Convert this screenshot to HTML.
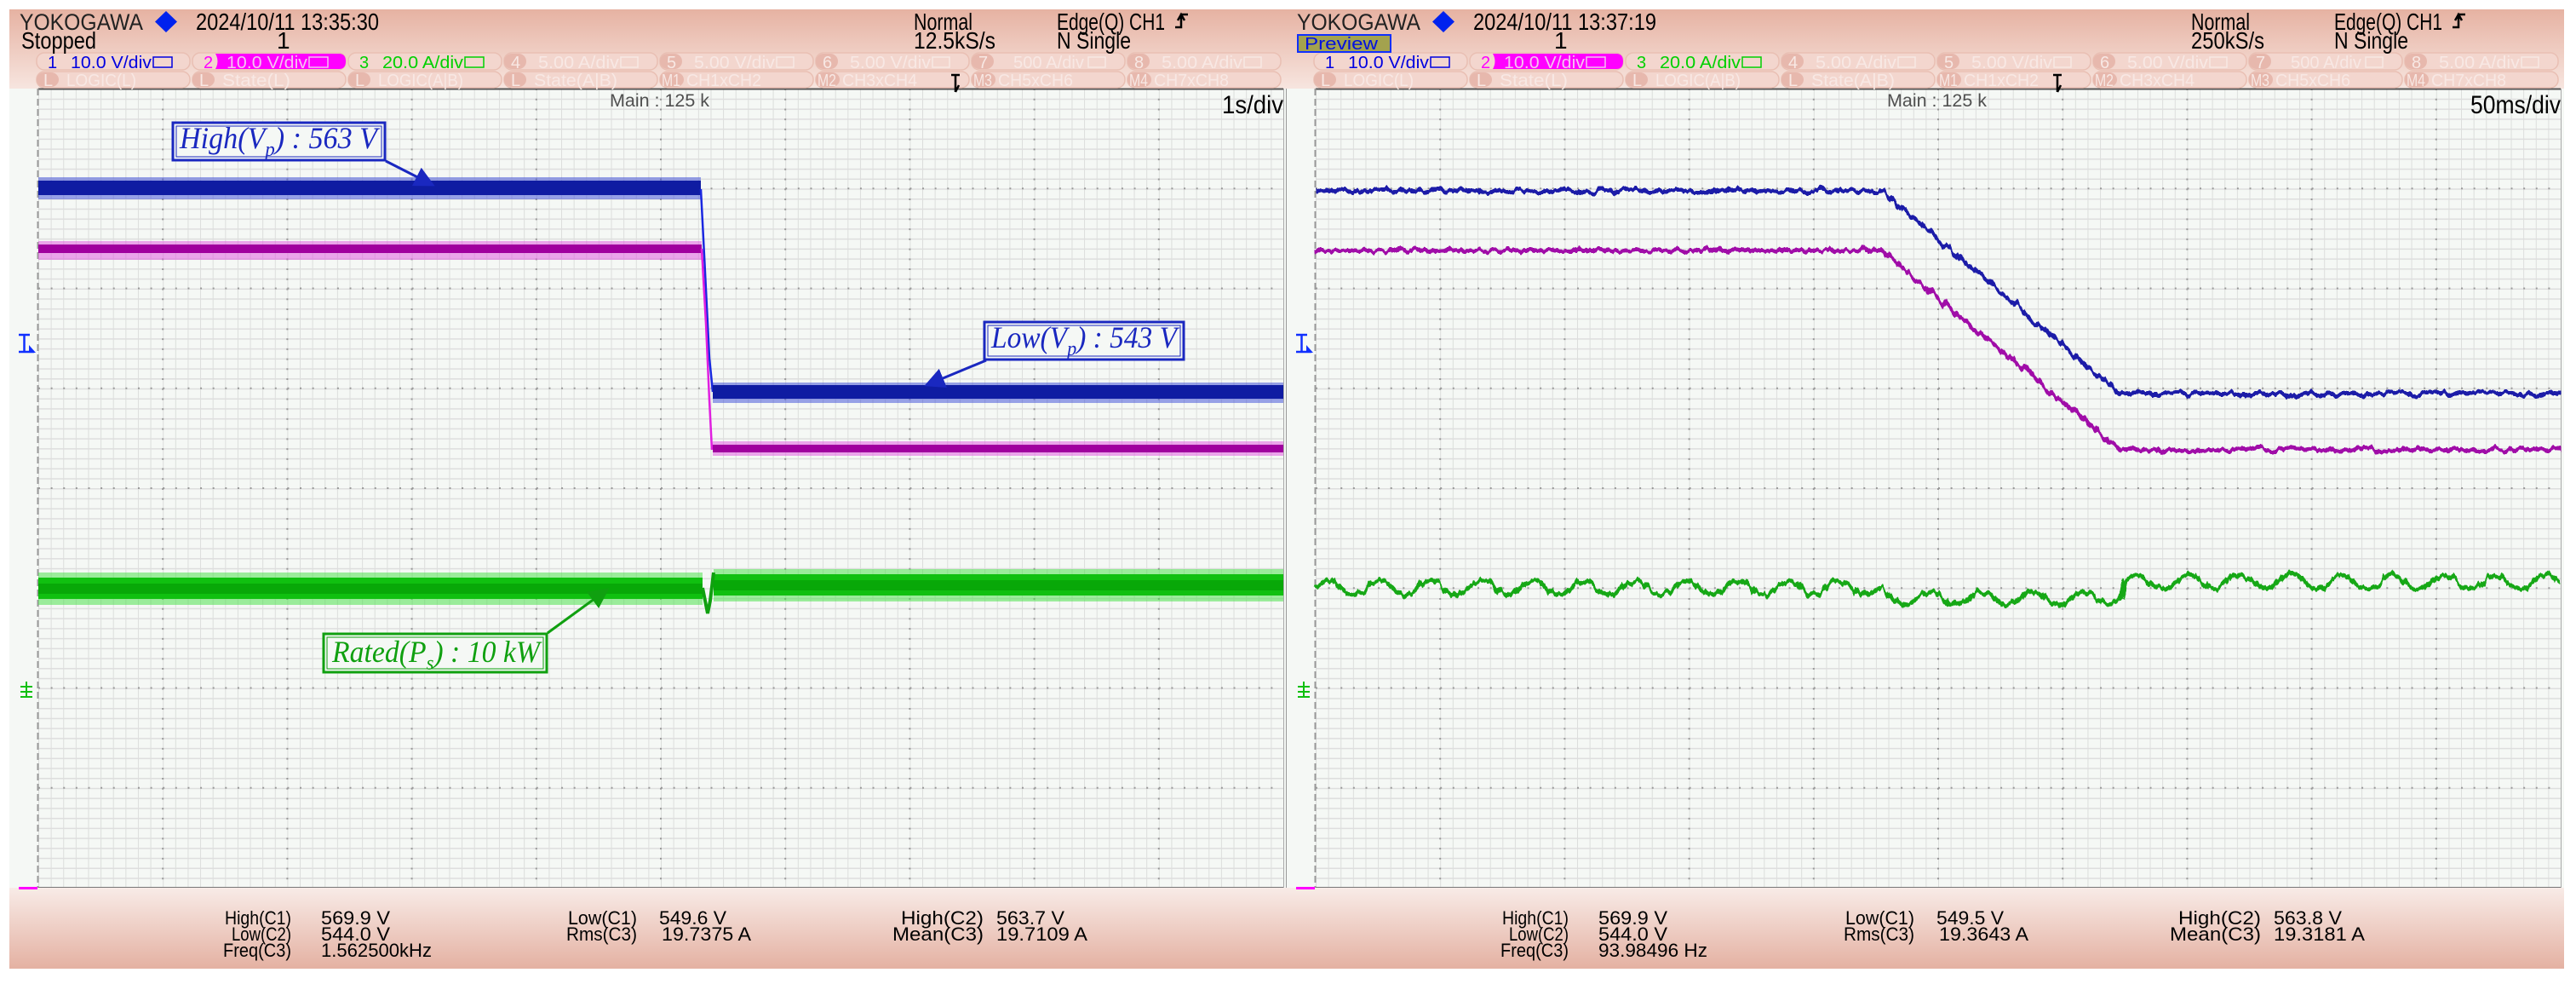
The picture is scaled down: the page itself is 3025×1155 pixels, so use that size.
<!DOCTYPE html>
<html><head><meta charset="utf-8"><style>
html,body{margin:0;padding:0;background:#fff;}
svg{display:block;}
.s{font-family:"Liberation Sans",sans-serif;}
.ser{font-family:"Liberation Serif",serif;font-style:italic;}
</style></head><body>
<svg width="3025" height="1155" viewBox="0 0 3025 1155" xmlns="http://www.w3.org/2000/svg">
<defs>
<linearGradient id="hg" x1="0" y1="0" x2="0" y2="1"><stop offset="0" stop-color="#e6b2a2"/><stop offset="1" stop-color="#f7e5df"/></linearGradient>
<linearGradient id="fg" x1="0" y1="0" x2="0" y2="1"><stop offset="0" stop-color="#f8ebe7"/><stop offset="1" stop-color="#e4b1a2"/></linearGradient>
<pattern id="gp" x="45" y="104" width="14.62" height="11.725" patternUnits="userSpaceOnUse">
<rect width="14.62" height="11.725" fill="#f5f8f5"/>
<line x1="0.5" y1="0" x2="0.5" y2="11.725" stroke="#dcdedc" stroke-width="1"/>
<line x1="0" y1="0.75" x2="14.62" y2="0.75" stroke="#dedede" stroke-width="1.5"/>
</pattern>
<marker id="ab" markerWidth="8" markerHeight="8" refX="7" refY="4" orient="auto" markerUnits="strokeWidth"><path d="M0,0 L8,4 L0,8 z" fill="#1a28c0"/></marker>
<marker id="ag" markerWidth="8" markerHeight="8" refX="7" refY="4" orient="auto" markerUnits="strokeWidth"><path d="M0,0 L8,4 L0,8 z" fill="#10a010"/></marker>
<filter id="nz" filterUnits="userSpaceOnUse" x="1530" y="150" width="1500" height="650"><feTurbulence type="fractalNoise" baseFrequency="0.12 0.02" numOctaves="3" seed="4"/><feDisplacementMap in="SourceGraphic" scale="12" xChannelSelector="R" yChannelSelector="G"/></filter>
<filter id="nzg" filterUnits="userSpaceOnUse" x="1530" y="600" width="1500" height="200"><feTurbulence type="fractalNoise" baseFrequency="0.15 0.02" numOctaves="3" seed="7"/><feDisplacementMap in="SourceGraphic" scale="12" xChannelSelector="R" yChannelSelector="G"/></filter>

<g id="base" class="s">
<rect x="11" y="11" width="1500" height="93" fill="url(#hg)"/>
<rect x="11" y="104" width="1500" height="938" fill="#f5f8f5"/>
<rect x="11" y="1042" width="1500" height="95" fill="url(#fg)"/>
<rect x="45" y="104" width="1462" height="938" fill="url(#gp)"/>
<g stroke="#999" stroke-width="2" stroke-dasharray="2 9.725">
<line x1="191.2" y1="104" x2="191.2" y2="1042"/><line x1="337.4" y1="104" x2="337.4" y2="1042"/><line x1="483.6" y1="104" x2="483.6" y2="1042"/><line x1="629.8" y1="104" x2="629.8" y2="1042"/><line x1="776" y1="104" x2="776" y2="1042"/><line x1="922.2" y1="104" x2="922.2" y2="1042"/><line x1="1068.4" y1="104" x2="1068.4" y2="1042"/><line x1="1214.6" y1="104" x2="1214.6" y2="1042"/><line x1="1360.8" y1="104" x2="1360.8" y2="1042"/>
</g>
<g stroke="#999" stroke-width="2" stroke-dasharray="2 12.62">
<line x1="45" y1="221.3" x2="1507" y2="221.3"/><line x1="45" y1="338.5" x2="1507" y2="338.5"/><line x1="45" y1="455.8" x2="1507" y2="455.8"/><line x1="45" y1="573" x2="1507" y2="573"/><line x1="45" y1="690.3" x2="1507" y2="690.3"/><line x1="45" y1="807.5" x2="1507" y2="807.5"/><line x1="45" y1="924.8" x2="1507" y2="924.8"/>
</g>
<line x1="45" y1="104.5" x2="1507" y2="104.5" stroke="#555" stroke-width="2"/>
<line x1="44.5" y1="104" x2="44.5" y2="1042" stroke="#999" stroke-width="2" stroke-dasharray="8 4"/>
<line x1="1507.5" y1="104" x2="1507.5" y2="1042" stroke="#aaa" stroke-width="1"/>
<line x1="45" y1="1041.5" x2="1507" y2="1041.5" stroke="#777" stroke-width="1"/>
<text x="716" y="125" font-size="21" fill="#505050" textLength="117" lengthAdjust="spacingAndGlyphs">Main : 125 k</text>
<g fill="#f3d6ce" stroke="#e9bfb3" stroke-width="1.5">
<rect x="43" y="62" width="180" height="20" rx="9"/><rect x="226" y="62" width="180" height="20" rx="9"/><rect x="409" y="62" width="180" height="20" rx="9"/><rect x="592" y="62" width="180" height="20" rx="9"/><rect x="775" y="62" width="180" height="20" rx="9"/><rect x="958" y="62" width="180" height="20" rx="9"/><rect x="1141" y="62" width="180" height="20" rx="9"/><rect x="1324" y="62" width="180" height="20" rx="9"/>
<rect x="43" y="84" width="180" height="19" rx="9"/><rect x="226" y="84" width="180" height="19" rx="9"/><rect x="409" y="84" width="180" height="19" rx="9"/><rect x="592" y="84" width="180" height="19" rx="9"/><rect x="775" y="84" width="180" height="19" rx="9"/><rect x="958" y="84" width="180" height="19" rx="9"/><rect x="1141" y="84" width="180" height="19" rx="9"/><rect x="1324" y="84" width="180" height="19" rx="9"/>
</g>
<g fill="#e7b8ad">
<rect x="592" y="63" width="26" height="18" rx="9"/><rect x="775" y="63" width="26" height="18" rx="9"/><rect x="958" y="63" width="26" height="18" rx="9"/><rect x="1141" y="63" width="26" height="18" rx="9"/><rect x="1324" y="63" width="26" height="18" rx="9"/>
<rect x="43" y="85" width="26" height="17" rx="9"/><rect x="226" y="85" width="26" height="17" rx="9"/><rect x="409" y="85" width="26" height="17" rx="9"/><rect x="592" y="85" width="26" height="17" rx="9"/><rect x="775" y="85" width="28" height="17" rx="9"/><rect x="958" y="85" width="28" height="17" rx="9"/><rect x="1141" y="85" width="28" height="17" rx="9"/><rect x="1324" y="85" width="28" height="17" rx="9"/>
</g>
<path d="M253 63 H398 Q406 63 406 72 Q406 81 398 81 H253 Q258 72 253 63 Z" fill="#ff00ff"/>
<g font-size="20">
<text x="56" y="80" fill="#0000e0">1</text><text x="83" y="80" fill="#0000e0" textLength="95" lengthAdjust="spacingAndGlyphs">10.0 V/div</text>
<text x="239" y="80" fill="#ff00ff">2</text><text x="266" y="80" fill="#f6c0f2" textLength="95" lengthAdjust="spacingAndGlyphs">10.0 V/div</text>
<text x="422" y="80" fill="#00d000">3</text><text x="449" y="80" fill="#00d000" textLength="95" lengthAdjust="spacingAndGlyphs">20.0 A/div</text>
<g fill="#f8e8e4">
<text x="600" y="80">4</text><text x="632" y="80" textLength="95" lengthAdjust="spacingAndGlyphs">5.00 A/div</text>
<text x="783" y="80">5</text><text x="815" y="80" textLength="95" lengthAdjust="spacingAndGlyphs">5.00 V/div</text>
<text x="966" y="80">6</text><text x="998" y="80" textLength="95" lengthAdjust="spacingAndGlyphs">5.00 V/div</text>
<text x="1149" y="80">7</text><text x="1190" y="80" textLength="83" lengthAdjust="spacingAndGlyphs">500 A/div</text>
<text x="1332" y="80">8</text><text x="1364" y="80" textLength="95" lengthAdjust="spacingAndGlyphs">5.00 A/div</text>
<text x="51" y="101">L</text><text x="78" y="101" textLength="82" lengthAdjust="spacingAndGlyphs">LOGIC(L)</text>
<text x="234" y="101">L</text><text x="261" y="101" textLength="80" lengthAdjust="spacingAndGlyphs">State(L)</text>
<text x="417" y="101">L</text><text x="444" y="101" textLength="100" lengthAdjust="spacingAndGlyphs">LOGIC(A|B)</text>
<text x="600" y="101">L</text><text x="627" y="101" textLength="98" lengthAdjust="spacingAndGlyphs">State(A|B)</text>
<text x="777" y="101" textLength="22" lengthAdjust="spacingAndGlyphs">M1</text><text x="806" y="101" textLength="88" lengthAdjust="spacingAndGlyphs">CH1xCH2</text>
<text x="960" y="101" textLength="22" lengthAdjust="spacingAndGlyphs">M2</text><text x="989" y="101" textLength="88" lengthAdjust="spacingAndGlyphs">CH3xCH4</text>
<text x="1143" y="101" textLength="22" lengthAdjust="spacingAndGlyphs">M3</text><text x="1172" y="101" textLength="88" lengthAdjust="spacingAndGlyphs">CH5xCH6</text>
<text x="1326" y="101" textLength="22" lengthAdjust="spacingAndGlyphs">M4</text><text x="1355" y="101" textLength="88" lengthAdjust="spacingAndGlyphs">CH7xCH8</text>
</g>
</g>
<g fill="none" stroke-width="1.5">
<rect x="180" y="67" width="22" height="12" stroke="#0000e0"/><rect x="363" y="67" width="22" height="12" stroke="#f6c0f2"/><rect x="546" y="67" width="22" height="12" stroke="#00d000"/>
<rect x="729" y="67" width="20" height="12" stroke="#f8e8e4"/><rect x="912" y="67" width="20" height="12" stroke="#f8e8e4"/><rect x="1095" y="67" width="20" height="12" stroke="#f8e8e4"/><rect x="1278" y="67" width="20" height="12" stroke="#f8e8e4"/><rect x="1461" y="67" width="20" height="12" stroke="#f8e8e4"/>
</g>
<text x="23" y="35" font-size="27" fill="#222" textLength="145" lengthAdjust="spacingAndGlyphs">YOKOGAWA</text>
<path d="M195 13 L208 25.5 L195 38 L182 25.5 Z" fill="#0022ee"/>
<text x="1073" y="35" font-size="28" fill="#000" textLength="69" lengthAdjust="spacingAndGlyphs">Normal</text>
<text x="1241" y="35" font-size="28" fill="#000" textLength="127" lengthAdjust="spacingAndGlyphs">Edge(Q) CH1</text>
<path d="M1380 32 H1387 V17 H1395 M1383 24 L1387 17 L1391 24" fill="none" stroke="#000" stroke-width="2.5"/>
<text x="1241" y="57" font-size="28" fill="#000" textLength="87" lengthAdjust="spacingAndGlyphs">N Single</text>
<text x="325" y="57" font-size="28" fill="#000">1</text>
<path d="M22 393 H35 M28.5 393 V413 M22 413 H40" stroke="#1030ff" stroke-width="2.5" fill="none"/>
<path d="M34 405 L42 414 L34 414 Z" fill="#1030ff"/>
<path d="M24 806 H38 M24 812 H38 M24 818 H38 M31 800 V818" stroke="#10c010" stroke-width="2" fill="none"/>
<rect x="22" y="1041" width="22" height="3" fill="#ff00ff"/>
<g font-size="22" fill="#000">
<text x="264" y="1085" textLength="78" lengthAdjust="spacingAndGlyphs">High(C1)</text>
<text x="272" y="1104" textLength="70" lengthAdjust="spacingAndGlyphs">Low(C2)</text>
<text x="262" y="1123" textLength="80" lengthAdjust="spacingAndGlyphs">Freq(C3)</text>
<text x="667" y="1085" textLength="81" lengthAdjust="spacingAndGlyphs">Low(C1)</text>
<text x="665" y="1104" textLength="83" lengthAdjust="spacingAndGlyphs">Rms(C3)</text>
<text x="1058" y="1085" textLength="97" lengthAdjust="spacingAndGlyphs">High(C2)</text>
<text x="1048" y="1104" textLength="107" lengthAdjust="spacingAndGlyphs">Mean(C3)</text>
</g>
</g>
</defs>

<rect width="3025" height="1155" fill="#fff"/>
<use href="#base"/>
<use href="#base" transform="translate(1500,0)"/>
<line x1="1510.5" y1="104" x2="1510.5" y2="1042" stroke="#999" stroke-width="1"/>

<g class="s">
<text x="25" y="57" font-size="28" fill="#000" textLength="88" lengthAdjust="spacingAndGlyphs">Stopped</text>
<text x="230" y="35" font-size="28" fill="#000" textLength="215" lengthAdjust="spacingAndGlyphs">2024/10/11 13:35:30</text>
<text x="1073" y="57" font-size="28" fill="#000" textLength="96" lengthAdjust="spacingAndGlyphs">12.5kS/s</text>
<text x="1435" y="133" font-size="30" fill="#000" textLength="72" lengthAdjust="spacingAndGlyphs">1s/div</text>
<g font-size="22" fill="#000">
<text x="377" y="1085" textLength="81" lengthAdjust="spacingAndGlyphs">569.9 V</text>
<text x="377" y="1104" textLength="81" lengthAdjust="spacingAndGlyphs">544.0 V</text>
<text x="377" y="1123" textLength="130" lengthAdjust="spacingAndGlyphs">1.562500kHz</text>
<text x="774" y="1085" textLength="79" lengthAdjust="spacingAndGlyphs">549.6 V</text>
<text x="777" y="1104" textLength="105" lengthAdjust="spacingAndGlyphs">19.7375 A</text>
<text x="1170" y="1085" textLength="80" lengthAdjust="spacingAndGlyphs">563.7 V</text>
<text x="1170" y="1104" textLength="107" lengthAdjust="spacingAndGlyphs">19.7109 A</text>
</g>
</g>
<path d="M1117 88 H1127 M1122 88 V108 M1122 108 L1126 100" stroke="#000" stroke-width="2.5" fill="none"/>

<rect x="45" y="208" width="778" height="26" fill="#3848d8" opacity="0.5"/>
<rect x="45" y="212" width="778" height="17" fill="#0f1ca2"/>
<rect x="45" y="283" width="779" height="22" fill="#e050e0" opacity="0.5"/>
<rect x="45" y="287" width="779" height="10" fill="#a0009e"/>
<path d="M823 222 L827 300 L833 420 L837 460" stroke="#1a28e0" stroke-width="2.5" fill="none"/>
<path d="M824 292 L829 380 L833 470 L836 528" stroke="#e020e0" stroke-width="2.5" fill="none"/>
<rect x="837" y="449" width="670" height="24" fill="#3848d8" opacity="0.5"/>
<rect x="837" y="452" width="670" height="16" fill="#0f1ca2"/>
<rect x="837" y="518" width="670" height="17" fill="#e050e0" opacity="0.5"/>
<rect x="837" y="522" width="670" height="9" fill="#a0009e"/>
<rect x="45" y="672" width="780" height="38" fill="#40e040" opacity="0.5"/>
<rect x="45" y="678" width="780" height="25" fill="#10c010"/>
<rect x="45" y="685" width="780" height="12" fill="#08a808"/>
<rect x="838" y="668" width="669" height="38" fill="#40e040" opacity="0.5"/>
<rect x="838" y="674" width="669" height="25" fill="#10c010"/>
<rect x="838" y="681" width="669" height="12" fill="#08a808"/>
<path d="M825 690 L828 705 L831 720 L834 705 L838 672" stroke="#10a010" stroke-width="4" fill="none"/>

<g fill="#f5f8f5" stroke="#1a28c0">
<rect x="203" y="144" width="249" height="44" stroke-width="3"/>
<rect x="207" y="148" width="241" height="36" stroke-width="1" fill="none"/>
<rect x="1156" y="378" width="234" height="44" stroke-width="3"/>
<rect x="1160" y="382" width="226" height="36" stroke-width="1" fill="none"/>
</g>
<g fill="#f5f8f5" stroke="#10a010">
<rect x="380" y="744" width="262" height="45" stroke-width="3"/>
<rect x="384" y="748" width="254" height="37" stroke-width="1" fill="none"/>
</g>
<line x1="453" y1="189" x2="508" y2="217" stroke="#1a28c0" stroke-width="3" marker-end="url(#ab)"/>
<line x1="1158" y1="423" x2="1088" y2="452" stroke="#1a28c0" stroke-width="3" marker-end="url(#ab)"/>
<line x1="643" y1="743" x2="713" y2="692" stroke="#10a010" stroke-width="3" marker-end="url(#ag)"/>
<g class="ser" font-size="36">
<text x="211" y="174" fill="#1a28c0" textLength="232" lengthAdjust="spacingAndGlyphs">High(V<tspan font-size="24" dy="9">p</tspan><tspan dy="-9">) : 563 V</tspan></text>
<text x="1164" y="408" fill="#1a28c0" textLength="218" lengthAdjust="spacingAndGlyphs">Low(V<tspan font-size="24" dy="9">p</tspan><tspan dy="-9">) : 543 V</tspan></text>
<text x="390" y="777" fill="#10a010" textLength="244" lengthAdjust="spacingAndGlyphs">Rated(P<tspan font-size="24" dy="9">s</tspan><tspan dy="-9">) : 10 kW</tspan></text>
</g>

<rect x="1524" y="41" width="109" height="20" fill="#a3a24e" stroke="#1030ff" stroke-width="2"/>
<g class="s">
<text x="1532" y="58" font-size="20" fill="#0010e0" textLength="86" lengthAdjust="spacingAndGlyphs">Preview</text>
<text x="1730" y="35" font-size="28" fill="#000" textLength="215" lengthAdjust="spacingAndGlyphs">2024/10/11 13:37:19</text>
<text x="2573" y="57" font-size="28" fill="#000" textLength="86" lengthAdjust="spacingAndGlyphs">250kS/s</text>
<text x="2901" y="133" font-size="30" fill="#000" textLength="106" lengthAdjust="spacingAndGlyphs">50ms/div</text>
<g font-size="22" fill="#000">
<text x="1877" y="1085" textLength="81" lengthAdjust="spacingAndGlyphs">569.9 V</text>
<text x="1877" y="1104" textLength="81" lengthAdjust="spacingAndGlyphs">544.0 V</text>
<text x="1877" y="1123" textLength="128" lengthAdjust="spacingAndGlyphs">93.98496 Hz</text>
<text x="2274" y="1085" textLength="79" lengthAdjust="spacingAndGlyphs">549.5 V</text>
<text x="2277" y="1104" textLength="105" lengthAdjust="spacingAndGlyphs">19.3643 A</text>
<text x="2670" y="1085" textLength="80" lengthAdjust="spacingAndGlyphs">563.8 V</text>
<text x="2670" y="1104" textLength="107" lengthAdjust="spacingAndGlyphs">19.3181 A</text>
</g>
</g>
<path d="M2411 88 H2421 M2416 88 V108 M2416 108 L2420 100" stroke="#000" stroke-width="2.5" fill="none"/>

<g filter="url(#nz)" fill="none" stroke-width="5" stroke-linejoin="round">
<path d="M1545 224 L2209 224 L2490 462 L3007 462" stroke="#1a1aa8"/>
<path d="M1545 294 L2209 294 L2490 528 L3007 528" stroke="#a010a8"/>
</g>
<g filter="url(#nzg)" fill="none" stroke-width="5" stroke-linejoin="round" stroke="#18a818">
<path d="M1545 690 q15 -16 30 0 t30 0 t30 0 t30 0 t30 0 t30 0 t30 0 t30 0 t30 0 t30 0 t30 0 t30 0 t30 0 t30 0 t30 0 t30 0 t30 0 t30 0 t30 0 t30 0 t30 0 t30 0 L2209 690 L2222 702 q15 14 30 0 t30 0 t30 0 t30 0 t30 0 t30 0 t30 0 t30 0 t28 0 L2495 683 q15 -16 30 0 t30 0 t30 0 t30 0 t30 0 t30 0 t30 0 t30 0 t30 0 t30 0 t30 0 t30 0 t30 0 t30 0 t30 0 t30 0 t30 0 L3007 683"/>
</g>
</svg>
</body></html>
